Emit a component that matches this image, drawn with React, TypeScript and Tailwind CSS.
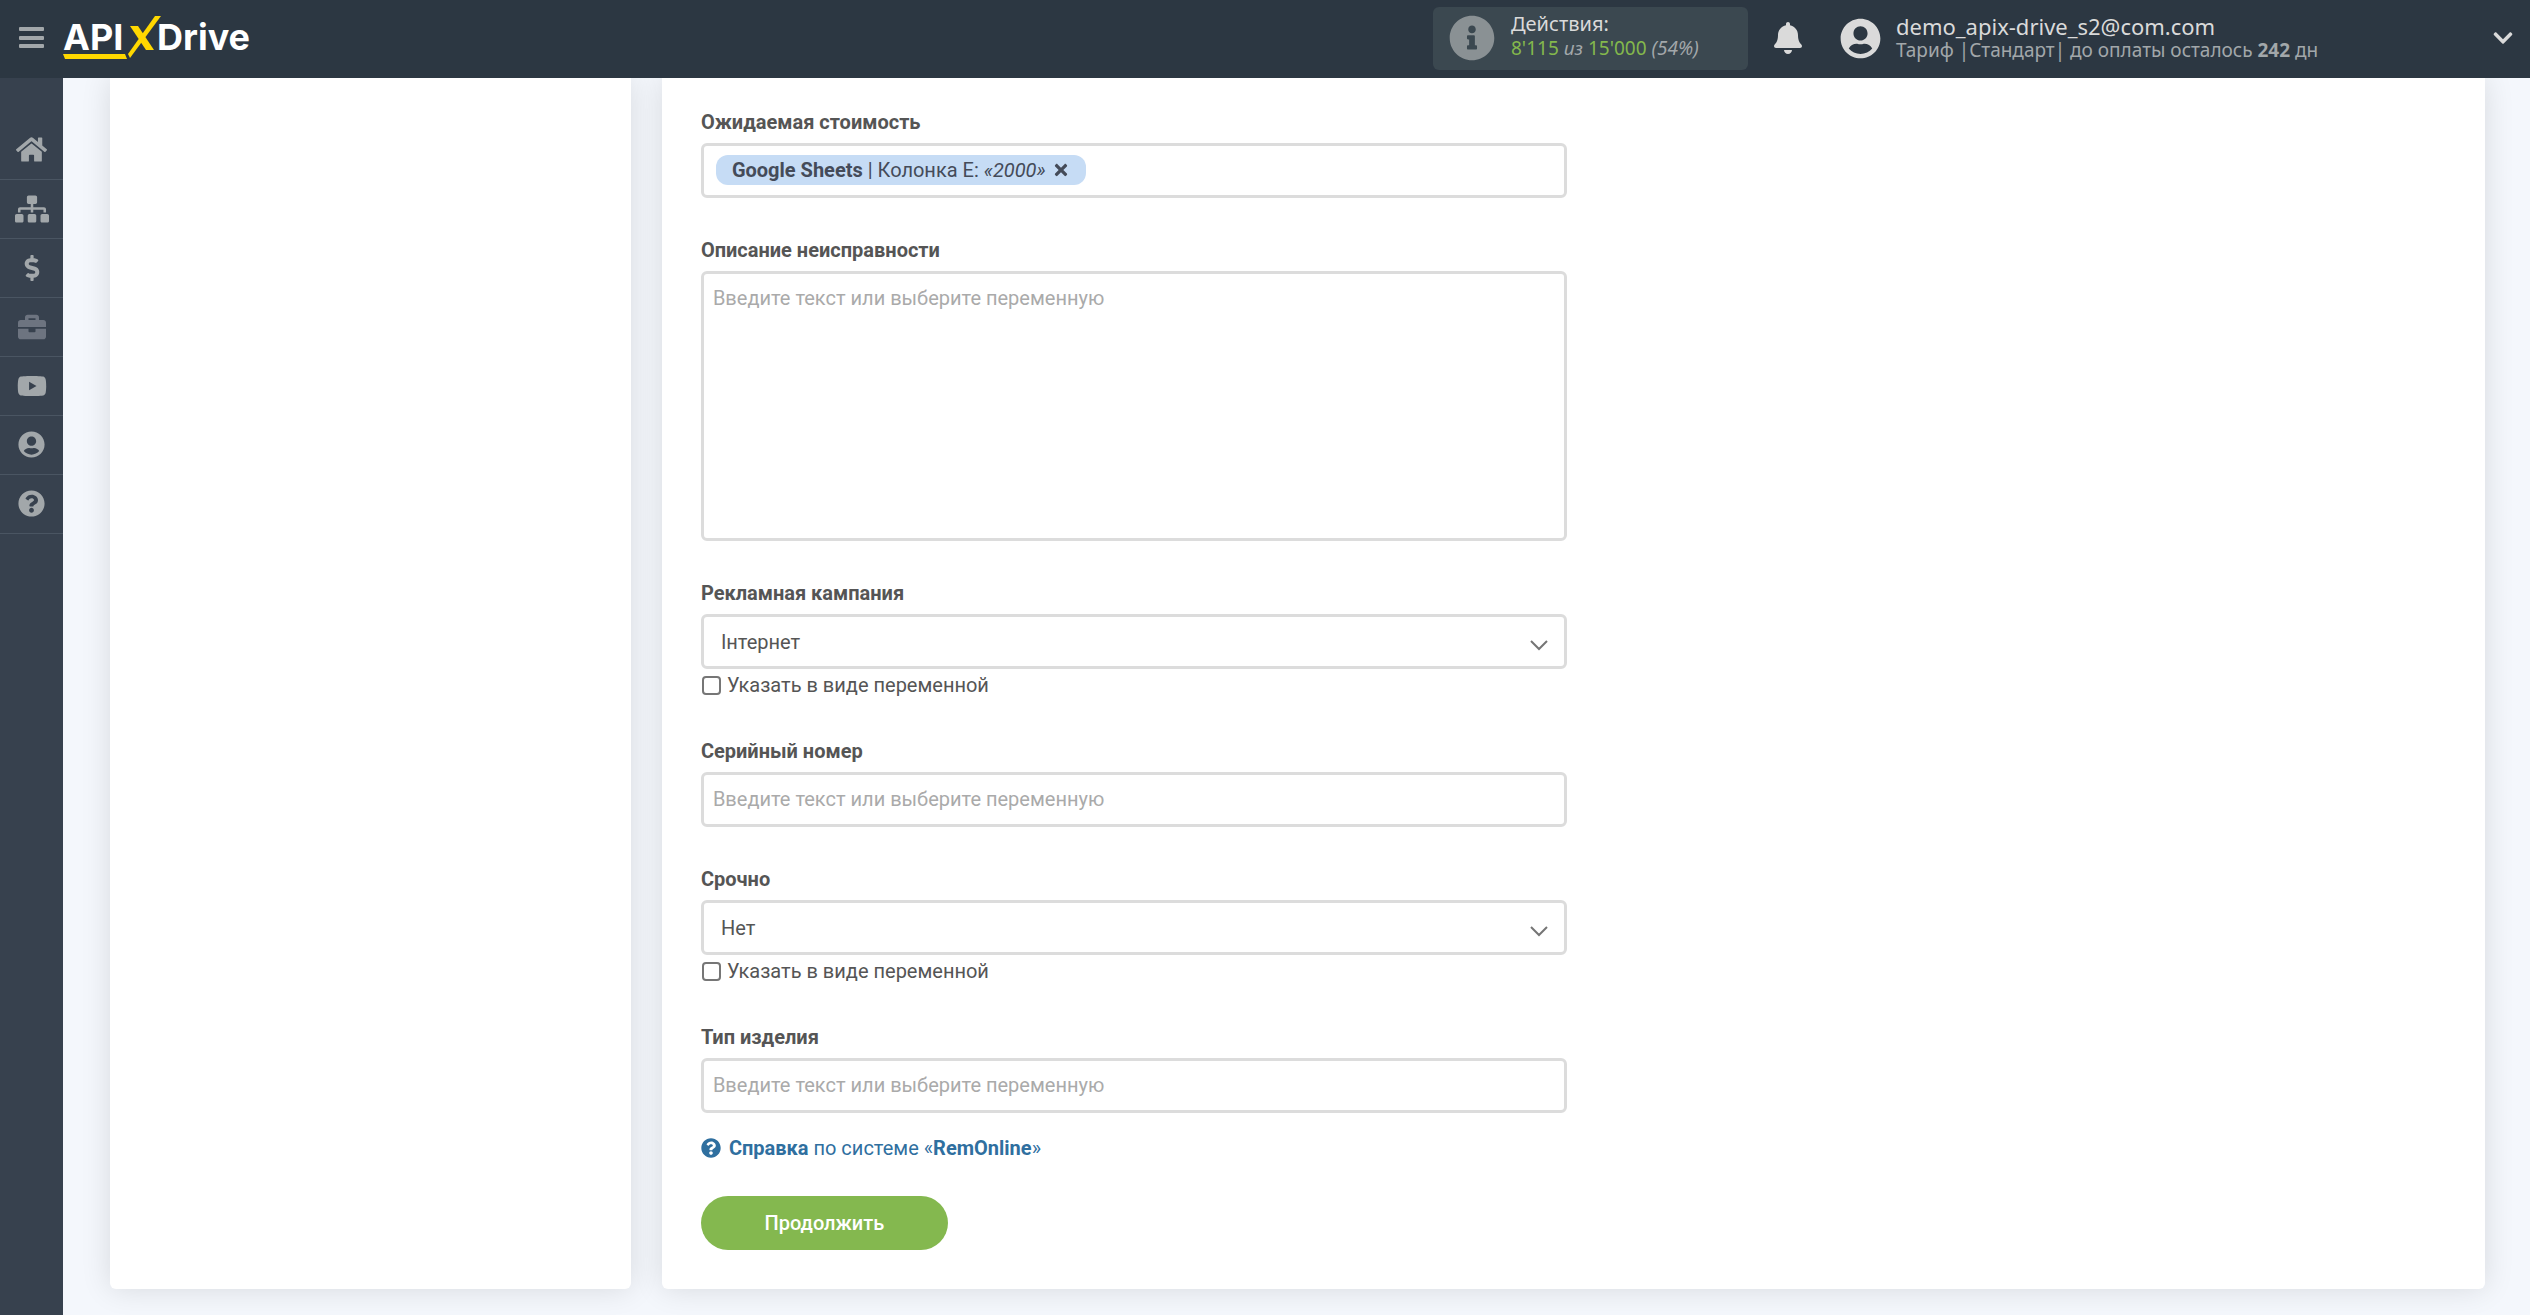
import type { ReactNode } from "react";
import { useState } from "react";
import type { IconType } from "react-icons";
import {
  FaBell,
  FaBriefcase,
  FaChevronDown,
  FaDollarSign,
  FaHome,
  FaInfoCircle,
  FaQuestionCircle,
  FaSitemap,
  FaTimes,
  FaUserCircle,
  FaYoutube,
} from "react-icons/fa";

const PLACEHOLDER = "Введите текст или выберите переменную";

type NavItem = { label: string; icon: IconType; size: number; muted?: boolean };

const navItems: NavItem[] = [
  { label: "Главная", icon: FaHome, size: 31 },
  { label: "Связи", icon: FaSitemap, size: 34 },
  { label: "Оплата", icon: FaDollarSign, size: 26 },
  { label: "Проекты", icon: FaBriefcase, size: 28, muted: true },
  { label: "Видео", icon: FaYoutube, size: 30 },
  { label: "Профиль", icon: FaUserCircle, size: 27 },
  { label: "Помощь", icon: FaQuestionCircle, size: 27 },
];

function Logo() {
  return (
    <svg width="192" height="48" viewBox="0 0 192 48" role="img" aria-label="APIXDrive">
      <g fill="#fff" fontFamily="Inter, sans-serif" fontWeight="700" fontSize="36">
        <text x="0" y="36">API</text>
        <text x="94" y="36">Drive</text>
      </g>
      <g fill="#ffd800">
        <path d="M67 12h8l16 24h-8z" />
        <path d="M92 2h6L67 44l-2-4z" />
        <path d="M0 40h62l2 5H2z" />
      </g>
    </svg>
  );
}

function Header() {
  return (
    <header className="flex h-[78px] items-center bg-[#2c3742] pr-4 pb-0.5 font-['Noto_Sans',sans-serif]">
      <button type="button" aria-label="Меню" className="flex w-[63px] justify-center text-[#a2a7aa]">
        <svg width="25" height="22" viewBox="0 0 25 22" fill="currentColor">
          <rect width="25" height="4" rx="1" />
          <rect y="9" width="25" height="4" rx="1" />
          <rect y="17" width="25" height="4" rx="1" />
        </svg>
      </button>
      <a href="#" className="block">
        <Logo />
      </a>

      <div className="ml-auto flex h-[63px] w-[315px] items-center gap-4 rounded-md bg-[#3b4850] pl-4">
        <FaInfoCircle size={46} className="text-[#8a9194]" />
        <div className="pb-1">
          <p className="text-[20px] leading-6 text-[#dadada]">Действия:</p>
          <p className="text-[19px] leading-6 text-[#a2a7aa]">
            <span className="text-[#84b84c]">8'115</span> <em>из</em>{" "}
            <span className="text-[#84b84c]">15'000</span> <em>(54%)</em>
          </p>
        </div>
      </div>

      <button type="button" aria-label="Уведомления" className="ml-6 text-[#dadada]">
        <FaBell size={32} />
      </button>

      <div className="ml-9 flex w-[674px] items-center text-[#dadada]">
        <FaUserCircle size={41} />
        <div className="ml-[15px]">
          <p className="text-[22px] leading-6">demo_apix-drive_s2@com.com</p>
          <p className="text-[19px] leading-6 text-[#a2a7aa]">
            Тариф |Стандарт| до оплаты осталось <b>242</b> дн
          </p>
        </div>
        <button type="button" aria-label="Открыть меню профиля" className="ml-auto">
          <FaChevronDown size={22} />
        </button>
      </div>
    </header>
  );
}

function Sidebar() {
  return (
    <nav className="w-[63px] shrink-0 bg-[#37414e] pt-[43px]">
      {navItems.map(({ label, icon: Icon, size, muted }) => (
        <a
          key={label}
          href="#"
          aria-label={label}
          className={`flex h-[59px] items-center justify-center border-b border-[#4a5562] pb-px ${
            muted ? "text-[#6d7480]" : "text-[#a2a7aa]"
          }`}
        >
          <Icon size={size} />
        </a>
      ))}
    </nav>
  );
}

function Field({ id, label, children }: { id: string; label: string; children: ReactNode }) {
  return (
    <div>
      <label htmlFor={id} className="mb-[7px] block leading-7 font-bold">
        {label}
      </label>
      {children}
    </div>
  );
}

function TextField({ id, label }: { id: string; label: string }) {
  return (
    <Field id={id} label={label}>
      <input
        id={id}
        type="text"
        placeholder={PLACEHOLDER}
        className="block h-[55px] w-full rounded-md border-3 border-[#dcdcdc] px-[9px] pb-0.5 outline-none placeholder:text-[#aaa]"
      />
    </Field>
  );
}

function SelectField({ id, label, options }: { id: string; label: string; options: string[] }) {
  return (
    <Field id={id} label={label}>
      <div className="relative">
        <select
          id={id}
          className="block h-[55px] w-full appearance-none rounded-md border-3 border-[#dcdcdc] bg-white px-[17px] outline-none"
        >
          {options.map((option) => (
            <option key={option}>{option}</option>
          ))}
        </select>
        <svg
          className="pointer-events-none absolute top-6 right-4 h-4 w-6"
          viewBox="0 0 24 16"
          fill="none"
          stroke="#757575"
          strokeWidth="2"
        >
          <path d="M4 3l8 8 8-8" />
        </svg>
      </div>
      <label className="flex h-[30px] items-end gap-1.5 leading-7">
        <input
          type="checkbox"
          className="mb-1 ml-px size-[19px] appearance-none rounded-[4px] border-2 border-[#767676] checked:bg-[#2f6f9f]"
        />
        Указать в виде переменной
      </label>
    </Field>
  );
}

export default function App() {
  const [hasVariable, setHasVariable] = useState<boolean>(true);

  return (
    <div className="flex min-h-screen flex-col bg-[#f4f7fc]">
      <Header />
      <div className="flex grow overflow-hidden">
        <Sidebar />
        <main className="grid grow grid-cols-[2fr_7fr] gap-[31px] pr-[45px] pb-[26px] pl-[47px] font-['Roboto',sans-serif] text-[20px] text-[#555]">
          <aside className="rounded-b-md bg-white shadow-[0_0_30px_rgba(0,0,0,0.12)]" />
          <section className="rounded-b-md bg-white px-[39px] pt-[30px] pb-[39px] shadow-[0_0_30px_rgba(0,0,0,0.12)]">
            <form
              className="w-full max-w-[866px]"
              onSubmit={(event) => event.preventDefault()}
            >
              <div className="space-y-[38px]">
                <Field id="cost" label="Ожидаемая стоимость">
                  <div className="flex h-[55px] items-center rounded-md border-3 border-[#dcdcdc] px-3 pb-0.5">
                    {hasVariable && (
                      <span className="flex h-[30px] items-center gap-1.5 rounded-xl bg-[#c6dcf5] px-4 whitespace-nowrap text-[#444b59]">
                        <span>
                          <b>Google Sheets</b> | Колонка E: <i>«2000»</i>
                        </span>
                        <button
                          type="button"
                          aria-label="Удалить"
                          onClick={() => setHasVariable(false)}
                        >
                          <FaTimes size={18} />
                        </button>
                      </span>
                    )}
                    <input id="cost" type="text" className="min-w-0 grow outline-none" />
                  </div>
                </Field>

                <Field id="description" label="Описание неисправности">
                  <textarea
                    id="description"
                    placeholder={PLACEHOLDER}
                    className="block h-[270px] w-full resize-none rounded-md border-3 border-[#dcdcdc] px-[9px] py-2 leading-8 outline-none placeholder:text-[#aaa]"
                  />
                </Field>

                <SelectField id="campaign" label="Рекламная кампания" options={["Інтернет"]} />
                <TextField id="serial" label="Серийный номер" />
                <SelectField id="urgent" label="Срочно" options={["Нет", "Да"]} />
                <TextField id="kind" label="Тип изделия" />
              </div>

              <a href="#" className="mt-[21px] flex w-fit items-center gap-2 leading-7 text-[#2f6f9f]">
                <FaQuestionCircle size={20} />
                <span>
                  <b>Справка</b> по системе «<b>RemOnline</b>»
                </span>
              </a>

              <button
                type="submit"
                className="mt-[34px] h-[54px] w-[247px] rounded-full bg-[#84b84f] font-medium text-white"
              >
                Продолжить
              </button>
            </form>
          </section>
        </main>
      </div>
    </div>
  );
}
